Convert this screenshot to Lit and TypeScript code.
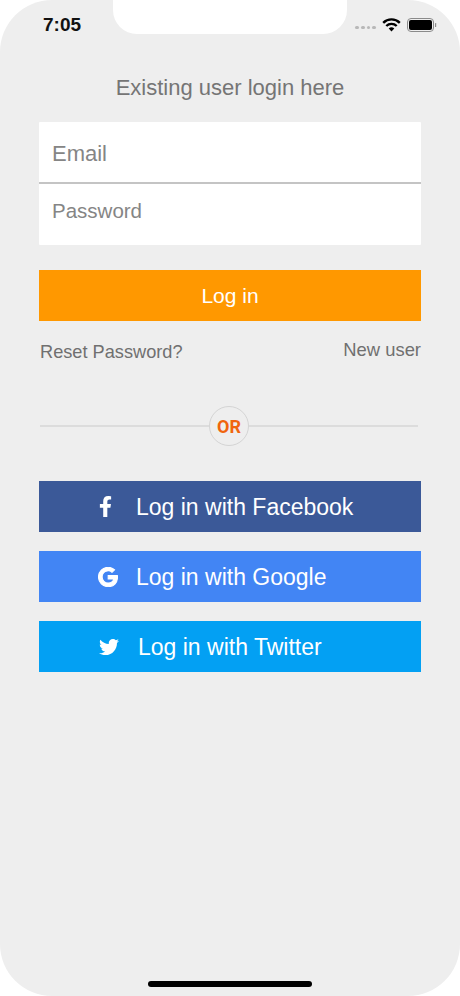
import { LitElement, css, html } from "lit";
import { customElement } from "lit/decorators.js";

const fbIcon = html`<svg class="icon" width="15" height="21" viewBox="0 0 320 512" fill="#fff"><path d="M279.14 288l14.22-92.66h-88.91v-60.13c0-25.35 12.42-50.06 52.24-50.06h40.42V6.26S260.43 0 225.36 0c-73.22 0-121.08 44.38-121.08 124.72v70.62H22.89V288h81.39v224h100.17V288z"/></svg>`;
const googleIcon = html`<svg class="icon" width="20" height="20" viewBox="0 0 488 512" fill="#fff" stroke="#fff" stroke-width="26"><path d="M488 261.8C488 403.3 391.1 504 248 504 110.8 504 0 393.2 0 256S110.8 8 248 8c66.8 0 123 24.5 166.3 64.9l-67.5 64.9C258.5 52.6 94.3 116.6 94.3 256c0 86.5 69.1 156.6 153.7 156.6 98.2 0 135-70.4 140.8-106.9H248v-85.3h236.1c2.3 12.7 3.9 24.9 3.9 41.4z"/></svg>`;
const twitterIcon = html`<svg class="icon" width="20" height="20" viewBox="0 0 512 512" fill="#fff"><path d="M459.37 151.716c.325 4.548.325 9.097.325 13.645 0 138.72-105.583 298.558-298.558 298.558-59.452 0-114.68-17.219-161.137-47.106 8.447.974 16.568 1.299 25.34 1.299 49.055 0 94.213-16.568 130.274-44.832-46.132-.975-84.792-31.188-98.112-72.772 6.498.974 12.995 1.624 19.818 1.624 9.421 0 18.843-1.3 27.614-3.573-48.081-9.747-84.143-51.98-84.143-102.985v-1.299c13.969 7.797 30.214 12.67 47.431 13.319-28.264-18.843-46.781-51.005-46.781-87.391 0-19.492 5.197-37.36 14.294-52.954 51.655 63.675 129.3 105.258 216.365 109.807-1.624-7.797-2.599-15.918-2.599-24.04 0-57.828 46.782-104.934 104.934-104.934 30.213 0 57.502 12.67 76.67 33.137 23.715-4.548 46.456-13.32 66.599-25.34-7.798 24.366-24.366 44.833-46.132 57.827 21.117-2.273 41.584-8.122 60.426-16.243-14.292 20.791-32.161 39.308-52.628 54.253z"/></svg>`;

@customElement("app-root")
export class AppRoot extends LitElement {
  static styles = css`
    :host {
      display: block;
      width: 460px;
      height: 996px;
      background: #fff;
      font-family: "Liberation Sans", Arial, sans-serif;
    }
    .screen {
      height: 996px;
      box-sizing: border-box;
      background: #eeeeee;
      border-radius: 52px;
      display: flex;
      flex-direction: column;
      overflow: hidden;
    }
    .status {
      height: 34px;
      display: flex;
      flex: none;
    }
    .time {
      width: 113px;
      box-sizing: border-box;
      padding: 15px 0 0 43px;
      font-size: 19px;
      line-height: 20px;
      font-weight: 700;
      color: #111;
    }
    .notch {
      width: 234px;
      background: #fff;
      border-radius: 0 0 24px 24px;
    }
    .sys {
      flex: 1;
      display: flex;
      align-items: center;
      padding: 16px 0 0 8px;
      height: 18px;
    }
    .dots {
      display: flex;
      gap: 2px;
      margin: 5px 6px 0 0;
    }
    .dots i {
      width: 3.8px;
      height: 3.8px;
      border-radius: 50%;
      background: #b8b8b8;
    }
    .wifi {
      margin-right: 6px;
    }
    .title {
      margin: 40px 0 0;
      text-align: center;
      font-size: 22px;
      line-height: 28px;
      font-weight: 400;
      color: #757575;
    }
    .body {
      padding: 20px 39px 0;
      display: flex;
      flex-direction: column;
    }
    .form {
      background: #fff;
      border-radius: 1px;
    }
    .field {
      box-sizing: border-box;
      padding-left: 13px;
      color: #858585;
      display: flex;
      align-items: center;
    }
    .email {
      height: 62px;
      font-size: 22px;
      border-bottom: 2px solid #c4c4c4;
      padding-top: 4px;
    }
    .password {
      height: 61px;
      font-size: 20.5px;
      padding-bottom: 8px;
    }
    .login {
      margin-top: 25px;
      height: 51px;
      background: #ff9800;
      color: #fff;
      font-size: 21px;
      display: flex;
      align-items: center;
      justify-content: center;
    }
    .links {
      display: flex;
      justify-content: space-between;
      color: #707070;
      font-size: 18.4px;
      line-height: 22px;
      margin-top: 18px;
    }
    .reset {
      padding: 2px 0 0 1px;
      font-size: 18.2px;
    }
    .or {
      margin-top: 43px;
      display: flex;
      align-items: center;
      padding: 0 3px 0 1px;
    }
    .or hr {
      flex: 1;
      margin: 0;
      border: 0;
      height: 2px;
      background: #dcdcdc;
    }
    .badge {
      width: 40px;
      height: 40px;
      box-sizing: border-box;
      border: 1px solid #d4d4d4;
      border-radius: 50%;
      display: flex;
      align-items: center;
      justify-content: center;
      font-family: Roboto, sans-serif;
      font-weight: 700;
      font-size: 18px;
      color: #f0650e;
      padding-top: 1px;
    }
    .social {
      margin-top: 35px;
      display: flex;
      flex-direction: column;
      gap: 19px;
    }
    .btn {
      height: 51px;
      display: flex;
      align-items: center;
      color: #fff;
      font-size: 23px;
      padding-top: 2px;
      box-sizing: border-box;
    }
    .slot {
      display: flex;
      justify-content: flex-end;
      margin-top: -2px;
    }
    .icon {
      display: block;
    }
    .fb .slot {
      padding-right: 23px;
      width: 74px;
    }
    .gg .slot {
      padding-right: 18px;
      width: 79px;
    }
    .tw .slot {
      padding-right: 19px;
      width: 80px;
    }
    .fb {
      background: #3b5998;
    }
    .gg {
      background: #4285f4;
    }
    .tw {
      background: #03a0f3;
    }
    .home {
      margin-top: auto;
      margin-bottom: 9px;
      align-self: center;
      width: 164px;
      height: 6px;
      border-radius: 3px;
      background: #000;
    }
  `;

  render() {
    return html`
      <div class="screen">
        <div class="status">
          <div class="time">7:05</div>
          <div class="notch"></div>
          <div class="sys">
            <div class="dots"><i></i><i></i><i></i><i></i></div>
            <svg class="wifi" width="19" height="14" viewBox="0 0 19 14" fill="none" stroke="#000" stroke-width="2.4">
              <path d="M1.2 4.8a11.8 11.8 0 0 1 16.6 0" />
              <path d="M4.3 8a7.4 7.4 0 0 1 10.4 0" />
              <path d="M9.5 13.5l-2.8-3a4 4 0 0 1 5.6 0z" fill="#000" stroke="none" />
            </svg>
            <svg width="30" height="14" viewBox="0 0 30 14">
              <rect x="0.5" y="0.5" width="26" height="13" rx="3.5" fill="none" stroke="#8a8a8a" />
              <rect x="2" y="2" width="23" height="10" rx="2" fill="#000" />
              <rect x="28" y="5" width="1.2" height="4" rx="0.6" fill="#8a8a8a" />
            </svg>
          </div>
        </div>
        <h1 class="title">Existing user login here</h1>
        <div class="body">
          <div class="form">
            <div class="field email">Email</div>
            <div class="field password">Password</div>
          </div>
          <div class="login">Log in</div>
          <div class="links">
            <span class="reset">Reset Password?</span>
            <span>New user</span>
          </div>
          <div class="or">
            <hr />
            <div class="badge">OR</div>
            <hr />
          </div>
          <div class="social">
            <div class="btn fb"><div class="slot">${fbIcon}</div>Log in with Facebook</div>
            <div class="btn gg"><div class="slot">${googleIcon}</div>Log in with Google</div>
            <div class="btn tw"><div class="slot">${twitterIcon}</div>Log in with Twitter</div>
          </div>
        </div>
        <div class="home"></div>
      </div>
    `;
  }
}
